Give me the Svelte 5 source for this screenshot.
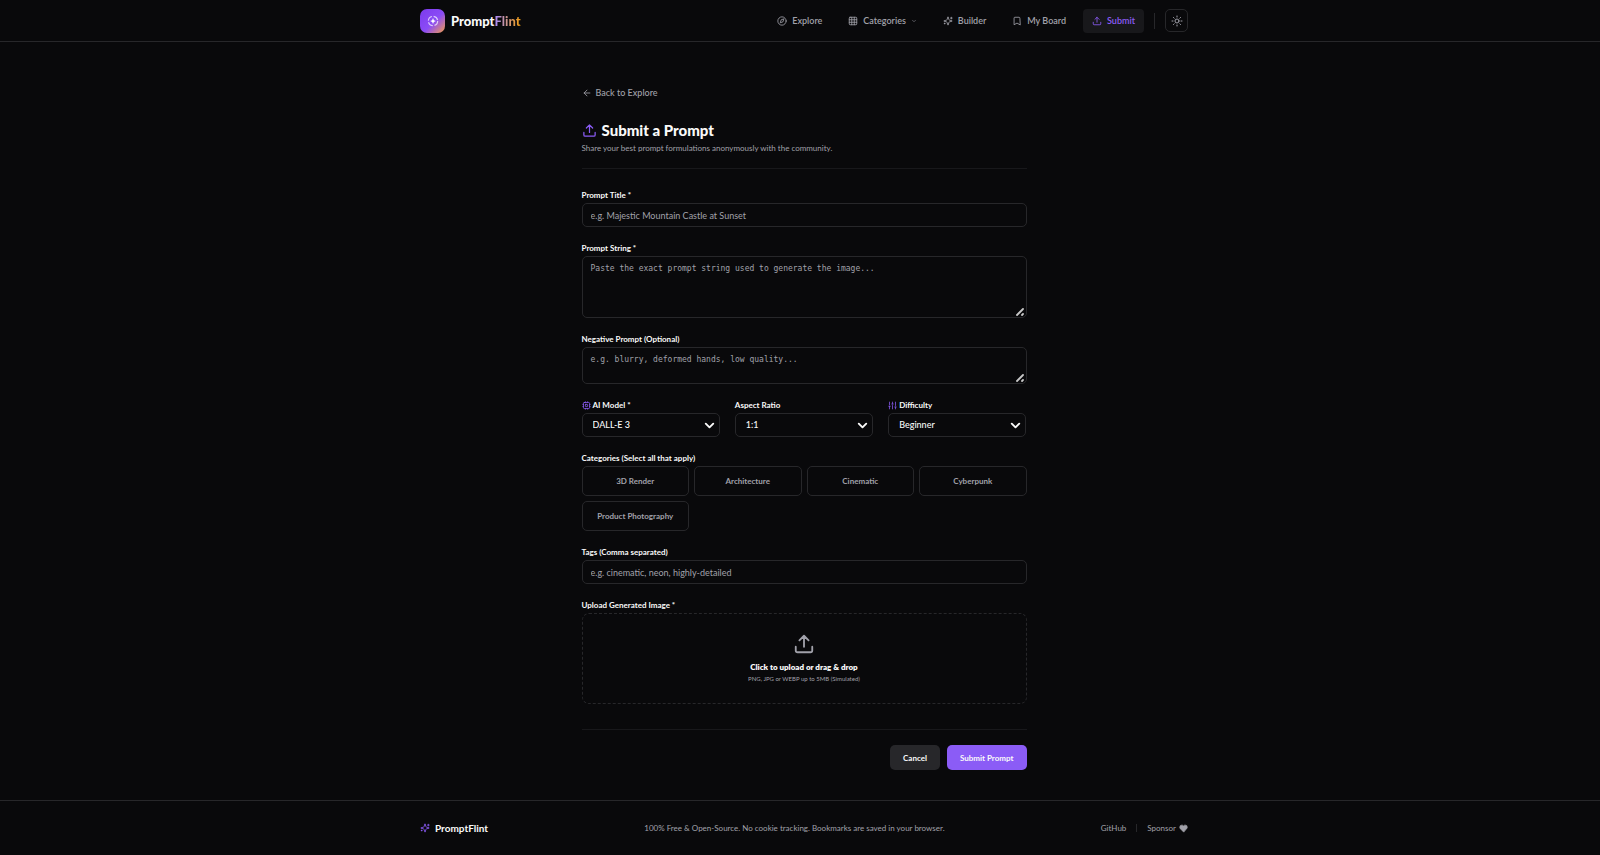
<script lang="ts">
  const categories = ['3D Render', 'Architecture', 'Cinematic', 'Cyberpunk', 'Product Photography'];
  const models = ['DALL-E 3', 'Midjourney', 'Stable Diffusion'];
  const ratios = ['1:1', '16:9', '9:16', '4:3'];
  const levels = ['Beginner', 'Intermediate', 'Advanced'];

  let selected = $state<string[]>([]);

  function toggle(name: string) {
    selected = selected.includes(name) ? selected.filter((c) => c !== name) : [...selected, name];
  }
</script>

{#snippet icon(name: string, size: number)}
  <svg class="icon" width={size} height={size} viewBox="0 0 24 24" aria-hidden="true">
    {#if name === 'compass'}
      <circle cx="12" cy="12" r="10" />
      <path d="m16.24 7.76-2.12 6.36-6.36 2.12 2.12-6.36z" />
    {:else if name === 'grid'}
      <rect x="3" y="3" width="18" height="18" rx="2" />
      <path d="M3 9h18M3 15h18M9 3v18M15 3v18" />
    {:else if name === 'chevron'}
      <path d="m6 9 6 6 6-6" />
    {:else if name === 'sparkles'}
      <path d="M9.94 15.5A2 2 0 0 0 8.5 14.06l-6.14-1.58a.5.5 0 0 1 0-.96L8.5 9.94A2 2 0 0 0 9.94 8.5l1.58-6.14a.5.5 0 0 1 .96 0l1.58 6.14a2 2 0 0 0 1.44 1.44l6.14 1.58a.5.5 0 0 1 0 .96l-6.14 1.58a2 2 0 0 0-1.44 1.44l-1.58 6.14a.5.5 0 0 1-.96 0z" />
      <path d="M20 3v4M22 5h-4M4 17v2M5 18H3" />
    {:else if name === 'bookmark'}
      <path d="m19 21-7-4-7 4V5a2 2 0 0 1 2-2h10a2 2 0 0 1 2 2z" />
    {:else if name === 'upload'}
      <path d="M21 15v4a2 2 0 0 1-2 2H5a2 2 0 0 1-2-2v-4M17 8l-5-5-5 5M12 3v12" />
    {:else if name === 'sun'}
      <circle cx="12" cy="12" r="4" />
      <path d="M12 2v2M12 20v2M4.93 4.93l1.41 1.41M17.66 17.66l1.41 1.41M2 12h2M20 12h2M6.34 17.66l-1.41 1.41M19.07 4.93l-1.41 1.41" />
    {:else if name === 'arrow-left'}
      <path d="m12 19-7-7 7-7M19 12H5" />
    {:else if name === 'cpu'}
      <rect x="4" y="4" width="16" height="16" rx="2" />
      <rect x="9" y="9" width="6" height="6" rx="1" />
      <path d="M15 2v2M15 20v2M2 15h2M2 9h2M20 15h2M20 9h2M9 2v2M9 20v2" />
    {:else if name === 'sliders'}
      <path d="M4 21v-7M4 10V3M12 21v-9M12 8V3M20 21v-5M20 12V3M2 14h4M10 8h4M18 16h4" />
    {:else if name === 'heart'}
      <path fill="currentColor" d="M19 14c1.49-1.46 3-3.21 3-5.5A5.5 5.5 0 0 0 16.5 3c-1.76 0-3 .5-4.5 2-1.5-1.5-2.74-2-4.5-2A5.5 5.5 0 0 0 2 8.5c0 2.3 1.5 4.05 3 5.5l7 7z" />
    {/if}
  </svg>
{/snippet}

<div class="page">
  <header class="site-header">
    <div class="container">
      <a class="brand" href="#home">
        <span class="brand-mark">
          <svg width="14" height="14" viewBox="0 0 24 24" aria-hidden="true">
            <circle class="ring" cx="12" cy="12" r="8" />
            <path class="star" d="m12 7 1.5 3.5L17 12l-3.5 1.5L12 17l-1.5-3.5L7 12l3.5-1.5z" />
          </svg>
        </span>
        <span class="brand-name">Prompt<span class="flint">Flint</span></span>
      </a>
      <nav>
        <a class="nav-link" href="#explore">{@render icon('compass', 10)}Explore</a>
        <button class="nav-link" type="button">
          {@render icon('grid', 10)}Categories{@render icon('chevron', 6)}
        </button>
        <a class="nav-link" href="#builder">{@render icon('sparkles', 10)}Builder</a>
        <a class="nav-link" href="#board">{@render icon('bookmark', 10)}My Board</a>
        <a class="nav-link active" href="#submit">{@render icon('upload', 10)}Submit</a>
        <span class="separator"></span>
        <button class="theme" type="button" aria-label="Toggle theme">{@render icon('sun', 12)}</button>
      </nav>
    </div>
  </header>

  <main>
    <div class="content">
      <a class="back" href="#explore">{@render icon('arrow-left', 10)}Back to Explore</a>

      <div class="heading">
        <h1>{@render icon('upload', 15)}Submit a Prompt</h1>
        <p>Share your best prompt formulations anonymously with the community.</p>
      </div>

      <form onsubmit={(e) => e.preventDefault()}>
        <div class="field">
          <label for="title">Prompt Title *</label>
          <input id="title" type="text" placeholder="e.g. Majestic Mountain Castle at Sunset" />
        </div>

        <div class="field">
          <label for="prompt">Prompt String *</label>
          <textarea id="prompt" class="tall" placeholder="Paste the exact prompt string used to generate the image..."></textarea>
        </div>

        <div class="field">
          <label for="negative">Negative Prompt (Optional)</label>
          <textarea id="negative" placeholder="e.g. blurry, deformed hands, low quality..."></textarea>
        </div>

        <div class="options">
          <div class="field">
            <label for="model">{@render icon('cpu', 9)}AI Model *</label>
            <div class="select">
              <select id="model">
                {#each models as m}<option>{m}</option>{/each}
              </select>
              {@render icon('chevron', 15)}
            </div>
          </div>
          <div class="field">
            <label for="ratio">Aspect Ratio</label>
            <div class="select">
              <select id="ratio">
                {#each ratios as r}<option>{r}</option>{/each}
              </select>
              {@render icon('chevron', 15)}
            </div>
          </div>
          <div class="field">
            <label for="difficulty">{@render icon('sliders', 9)}Difficulty</label>
            <div class="select">
              <select id="difficulty">
                {#each levels as l}<option>{l}</option>{/each}
              </select>
              {@render icon('chevron', 15)}
            </div>
          </div>
        </div>

        <div class="field" role="group" aria-labelledby="categories-label">
          <span class="label" id="categories-label">Categories (Select all that apply)</span>
          <div class="chips">
            {#each categories as name}
              <button
                type="button"
                class="chip"
                class:on={selected.includes(name)}
                aria-pressed={selected.includes(name)}
                onclick={() => toggle(name)}>{name}</button>
            {/each}
          </div>
        </div>

        <div class="field">
          <label for="tags">Tags (Comma separated)</label>
          <input id="tags" type="text" placeholder="e.g. cinematic, neon, highly-detailed" />
        </div>

        <div class="field">
          <label for="image">Upload Generated Image *</label>
          <label class="dropzone" for="image">
            {@render icon('upload', 22)}
            <strong>Click to upload or drag &amp; drop</strong>
            <small>PNG, JPG or WEBP up to 5MB (Simulated)</small>
          </label>
          <input id="image" type="file" accept="image/*" hidden />
        </div>

        <div class="actions">
          <button class="btn" type="button">Cancel</button>
          <button class="btn primary" type="submit">Submit Prompt</button>
        </div>
      </form>
    </div>
  </main>

  <footer>
    <div class="container">
      <div class="footer-brand">{@render icon('sparkles', 10)}PromptFlint</div>
      <p>100% Free &amp; Open-Source. No cookie tracking. Bookmarks are saved in your browser.</p>
      <div class="footer-links">
        <a href="#github">GitHub</a>
        <span class="footer-sep"></span>
        <a href="#sponsor">Sponsor {@render icon('heart', 9)}</a>
      </div>
    </div>
  </footer>
</div>

<style>
  :global(body) { background: #09090b; }
  .page {
    --accent: #8b5cf6;
    --text: #fafafa;
    --muted: #a1a1aa;
    --border: #27272a;
    min-height: 100vh;
    display: flex;
    flex-direction: column;
    background: #09090b;
    color: var(--text);
    font-family: Lato, "Noto Sans", sans-serif;
    font-size: 8px;
    line-height: 12px;
  }
  .page * { box-sizing: border-box; }
  h1, p { margin: 0; }
  a { color: inherit; text-decoration: none; }
  button, input, textarea, select { font: inherit; color: inherit; margin: 0; }
  button { cursor: pointer; }
  .icon {
    flex: none;
    fill: none;
    stroke: currentColor;
    stroke-width: 2;
    stroke-linecap: round;
    stroke-linejoin: round;
  }
  .site-header, main, footer { padding-left: 8px; }
  .container {
    width: 100%;
    max-width: 768px;
    margin: 0 auto;
    display: flex;
    align-items: center;
    justify-content: space-between;
  }

  .site-header { border-bottom: 1px solid var(--border); }
  .site-header .container { height: 41px; }
  .brand { display: flex; align-items: center; gap: 6px; }
  .brand-mark {
    width: 25px;
    height: 24px;
    display: grid;
    place-items: center;
    border-radius: 7px;
    background: linear-gradient(135deg, #7c3aed 0%, #8b4cf6 55%, #f59e4b 100%);
  }
  .ring { fill: none; stroke: #fff; stroke-width: 2; stroke-dasharray: 9.6 3; opacity: 0.7; }
  .star { fill: #fff; }
  .brand-name { font-size: 13px; line-height: 16px; font-weight: 900; }
  .flint {
    background: linear-gradient(90deg, #a78bfa, #f59e0b);
    background-clip: text;
    color: transparent;
  }
  nav { display: flex; align-items: center; gap: 8px; }
  .nav-link {
    display: flex;
    align-items: center;
    gap: 5px;
    height: 24px;
    padding: 0 9px;
    border: 0;
    border-radius: 4px;
    background: none;
    color: var(--muted);
    font-size: 9px;
    font-weight: 600;
  }
  .nav-link.active { background: #18181b; color: var(--accent); }
  .separator { width: 1px; height: 16px; margin: 0 2px; background: var(--border); }
  .theme {
    display: grid;
    place-items: center;
    width: 23px;
    height: 23px;
    padding: 0;
    border: 1px solid var(--border);
    border-radius: 5px;
    background: none;
    color: var(--muted);
  }

  main { flex: 1; }
  .content {
    width: 100%;
    max-width: 445px;
    margin: 0 auto;
    padding: 45px 0 30px;
  }
  .back {
    display: inline-flex;
    align-items: center;
    gap: 4px;
    color: var(--muted);
    font-size: 9px;
    font-weight: 500;
  }
  .heading {
    margin-top: 17px;
    padding-bottom: 14px;
    border-bottom: 1px solid #18181b;
  }
  .heading h1 {
    display: flex;
    align-items: center;
    gap: 5px;
    font-size: 15px;
    line-height: 24px;
    font-weight: 900;
  }
  .heading h1 :global(.icon), .field label:not(.dropzone) :global(.icon) { color: var(--accent); }
  .heading p { color: var(--muted); }

  form { display: flex; flex-direction: column; gap: 15px; padding-top: 20px; }
  .field { display: flex; flex-direction: column; gap: 2px; }
  .field > label, .label {
    display: flex;
    align-items: center;
    gap: 2px;
    font-weight: 700;
  }
  input, textarea, select, .chip {
    width: 100%;
    border: 1px solid var(--border);
    border-radius: 5px;
    background: transparent;
    outline: none;
  }
  input { height: 24px; padding: 0 8px; font-size: 9px; }
  textarea {
    display: block;
    height: 37px;
    padding: 6px 8px;
    font-family: "DejaVu Sans Mono", monospace;
    resize: vertical;
  }
  textarea.tall { height: 62px; }
  textarea::-webkit-resizer {
    background: url("data:image/svg+xml,%3Csvg xmlns='http://www.w3.org/2000/svg' viewBox='0 0 15 15'%3E%3Cpath d='M6 13l6-6M11 13l1-1' stroke='%23c8c8c8' stroke-width='1.8' stroke-linecap='round'/%3E%3C/svg%3E") center no-repeat;
  }
  input::placeholder, textarea::placeholder { color: var(--muted); opacity: 1; }
  input:focus, textarea:focus, select:focus { border-color: var(--accent); }

  .options { display: grid; grid-template-columns: repeat(3, 1fr); gap: 15px; }
  .select { display: grid; align-items: center; }
  .select select {
    grid-area: 1 / 1;
    height: 24px;
    padding: 0 10px;
    font-size: 9px;
    font-weight: 500;
    appearance: none;
  }
  .select select option { background: #09090b; }
  .select :global(.icon) {
    grid-area: 1 / 1;
    justify-self: end;
    margin-right: 3px;
    stroke-width: 3;
    pointer-events: none;
  }

  .chips { display: grid; grid-template-columns: repeat(4, 1fr); gap: 5px; }
  .chip { height: 30px; padding: 0; color: var(--muted); font-weight: 700; }
  .chip.on { border-color: var(--accent); color: var(--accent); }

  .field > .dropzone {
    flex-direction: column;
    justify-content: center;
    gap: 0;
    height: 91px;
    border: 1px dashed var(--border);
    border-radius: 7px;
    cursor: pointer;
  }
  .dropzone :global(.icon) { color: var(--muted); margin-bottom: 6px; }
  .dropzone strong { font-weight: 800; }
  .dropzone small { color: var(--muted); font-size: 6px; font-weight: 400; }

  .actions {
    display: flex;
    justify-content: flex-end;
    gap: 7px;
    margin-top: 10px;
    padding-top: 15px;
    border-top: 1px solid #18181b;
  }
  .btn {
    height: 25px;
    padding: 0 13px;
    border: 0;
    border-radius: 5px;
    background: var(--border);
    font-weight: 700;
  }
  .btn.primary { background: var(--accent); }

  footer { border-top: 1px solid var(--border); }
  footer .container { height: 54px; color: var(--muted); }
  .footer-brand {
    display: flex;
    align-items: center;
    gap: 5px;
    color: var(--text);
    font-size: 10px;
    font-weight: 700;
  }
  .footer-brand :global(.icon) { color: var(--accent); }
  .footer-links { display: flex; align-items: center; gap: 10px; }
  .footer-links a { display: flex; align-items: center; gap: 3px; }
  .footer-sep { width: 1px; height: 8px; background: var(--border); }
</style>
